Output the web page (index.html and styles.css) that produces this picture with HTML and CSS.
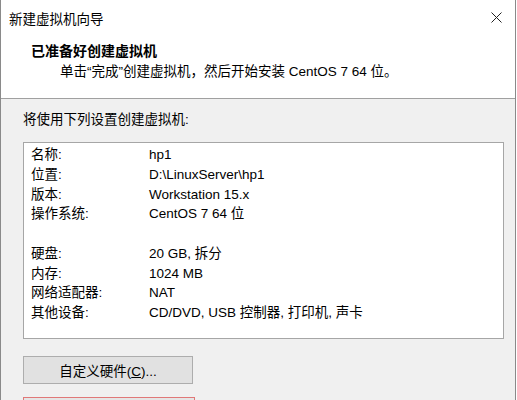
FILE: index.html
```html
<!DOCTYPE html>
<html lang="zh-CN">
<head>
  <meta charset="UTF-8" />
  <title>新建虚拟机向导</title>
  <link rel="stylesheet" href="styles.css">
</head>
<body>
  <div class="window">
    <div class="titlebar">
      <span class="title">新建虚拟机向导</span>
      <span class="close">
        <svg width="11" height="11" viewBox="0 0 11 11"><path d="M0.5 0.5 L10.5 10.5 M10.5 0.5 L0.5 10.5" stroke="#222" stroke-width="1"/></svg>
      </span>
    </div>

    <div class="header">
      <h1>已准备好创建虚拟机</h1>
      <p>单击“完成”创建虚拟机，然后开始安装 CentOS 7 64 位。</p>
    </div>

    <div class="content">
      <p class="intro">将使用下列设置创建虚拟机:</p>
      <div class="summary">
        <div class="row"><span class="label">名称:</span><span>hp1</span></div>
        <div class="row"><span class="label">位置:</span><span>D:\LinuxServer\hp1</span></div>
        <div class="row"><span class="label">版本:</span><span>Workstation 15.x</span></div>
        <div class="row"><span class="label">操作系统:</span><span>CentOS 7 64 位</span></div>
        <div class="row"></div>
        <div class="row"><span class="label">硬盘:</span><span>20 GB, 拆分</span></div>
        <div class="row"><span class="label">内存:</span><span>1024 MB</span></div>
        <div class="row"><span class="label">网络适配器:</span><span>NAT</span></div>
        <div class="row"><span class="label">其他设备:</span><span>CD/DVD, USB 控制器, 打印机, 声卡</span></div>
      </div>
      <button class="btn">自定义硬件(<u>C</u>)...</button>
      <div class="next"></div>
    </div>
  </div>
</body>
</html>
```

FILE: styles.css
```css
body {
  margin: 0;
  background: #fff; color: #000;
  font-family: "Liberation Sans", "Noto Sans CJK SC", sans-serif;
  font-size: 13.5px;
}
.window {
  width: 516px; height: 400px;
  box-sizing: border-box;
  border-left: 1px solid #8a8a8a;
  border-right: 1px solid #8a8a8a;
  overflow: hidden;
  display: flex; flex-direction: column;
}
.titlebar {
  flex-shrink: 0;
  height: 36px;
  display: flex; align-items: center; justify-content: space-between;
  padding: 0 13px 0 8px;
  background: #fff;
}
.close { display: flex; margin-top: -2px; }
.header {
  flex-shrink: 0;
  height: 63px; box-sizing: border-box;
  padding: 5px 0 0 30px;
  border-bottom: 1px solid #a0a0a0;
  background: #fff;
}
.header h1 {
  margin: 0; font-size: 14px; line-height: 20px; font-weight: bold;
}
.header p {
  margin: 1px 0 0 29px; line-height: 20px;
}
.content {
  flex: 1 0 auto;
  background: #f0f0f0;
  padding: 11px 0 0 22px;
}
.intro { margin: 0; line-height: 20px; }
.summary {
  margin-top: 12px;
  width: 481px; height: 197px; box-sizing: border-box;
  border: 1px solid #a6a6a6;
  background: #fff;
  padding: 2px 0 0 7px;
}
.row {
  display: flex; height: 19.75px; line-height: 19.75px;
}
.label { width: 118px; }
.btn {
  display: block;
  margin-top: 17px;
  width: 170px; height: 28px;
  border: 1px solid #adadad;
  background: #e1e1e1;
  font: inherit; color: #000;
  padding: 0;
}
.btn u { text-decoration: underline; }
.next {
  margin-top: 13px;
  width: 170px; height: 28px;
  border: 1px solid #e07878;
  background: #e5e5e5;
}
```
